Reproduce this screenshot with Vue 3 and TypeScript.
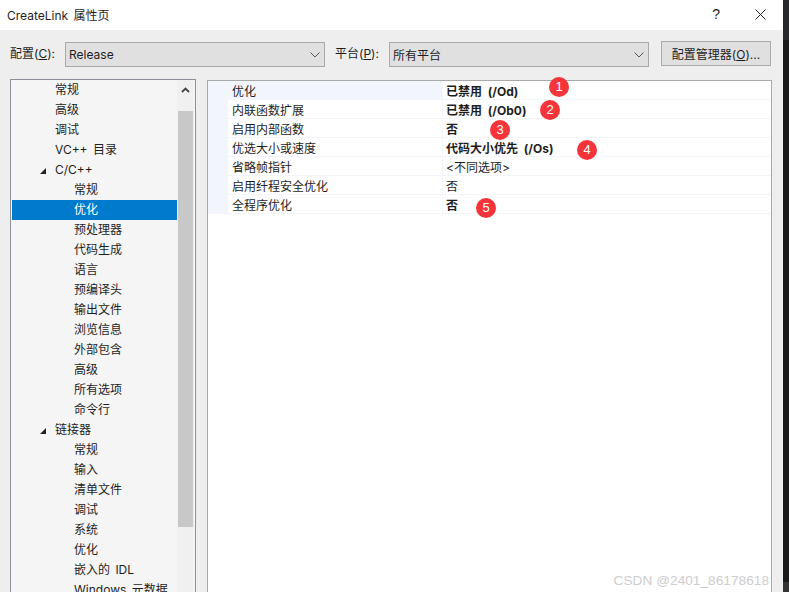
<script setup lang="ts">
interface TreeItem { label: string; level: number; open?: boolean; selected?: boolean }
const tree: TreeItem[] = [
  { label: '常规', level: 1 }, { label: '高级', level: 1 }, { label: '调试', level: 1 },
  { label: 'VC++ 目录', level: 1 }, { label: 'C/C++', level: 1, open: true },
  { label: '常规', level: 2 }, { label: '优化', level: 2, selected: true },
  { label: '预处理器', level: 2 }, { label: '代码生成', level: 2 }, { label: '语言', level: 2 },
  { label: '预编译头', level: 2 }, { label: '输出文件', level: 2 }, { label: '浏览信息', level: 2 },
  { label: '外部包含', level: 2 }, { label: '高级', level: 2 }, { label: '所有选项', level: 2 },
  { label: '命令行', level: 2 }, { label: '链接器', level: 1, open: true },
  { label: '常规', level: 2 }, { label: '输入', level: 2 }, { label: '清单文件', level: 2 },
  { label: '调试', level: 2 }, { label: '系统', level: 2 }, { label: '优化', level: 2 },
  { label: '嵌入的 IDL', level: 2 }, { label: 'Windows 元数据', level: 2 }
]
interface Row { name: string; value: string; bold: boolean; first?: boolean }
const rows: Row[] = [
  { name: '优化', value: '已禁用 (/Od)', bold: true, first: true },
  { name: '内联函数扩展', value: '已禁用 (/Ob0)', bold: true },
  { name: '启用内部函数', value: '否', bold: true },
  { name: '优选大小或速度', value: '代码大小优先 (/Os)', bold: true },
  { name: '省略帧指针', value: '<不同选项>', bold: false },
  { name: '启用纤程安全优化', value: '否', bold: false },
  { name: '全程序优化', value: '否', bold: true }
]
/* Red numbered annotations pasted over the grid: centre points in grid coordinates */
const marks = [
  { n: 1, x: 351, y: 6 },
  { n: 2, x: 342, y: 29 },
  { n: 3, x: 292, y: 49 },
  { n: 4, x: 379, y: 69 },
  { n: 5, x: 278, y: 127 }
]
</script>

<template>
  <div class="dialog">
    <header class="titlebar">
      <span class="title">CreateLink 属性页</span>
      <span class="help">?</span>
      <svg class="close" width="11" height="11" viewBox="0 0 11 11"><path d="M.5.5l10 10M10.500.5l-10 10" stroke="#222" stroke-width="1" fill="none" /></svg>
    </header>
    <main class="body">
      <div class="toolbar">
        <label class="lab lab-config">配置(<u>C</u>):</label>
        <div class="select">
          <span>Release</span>
          <svg width="10" height="6" viewBox="0 0 10 6"><path d="M.5.5L5 5 9.500.5" stroke="#555" fill="none" /></svg>
        </div>
        <label class="lab lab-platform">平台(<u>P</u>):</label>
        <div class="select">
          <span>所有平台</span>
          <svg width="10" height="6" viewBox="0 0 10 6"><path d="M.5.5L5 5 9.500.5" stroke="#555" fill="none" /></svg>
        </div>
        <button class="manager">配置管理器(<u>O</u>)...</button>
      </div>
      <div class="panes">
        <nav class="treebox">
          <ul class="tree">
            <li v-for="(it, i) in tree" :key="i" class="node" :class="[`lv${it.level}`, { sel: it.selected }]">
              <i v-if="it.open" class="arrow"></i>{{ it.label }}
            </li>
          </ul>
          <div class="scroll">
            <div class="scroll-up">
              <svg width="9" height="6" viewBox="0 0 9 6"><path d="M1 5l3.500-3.500L8 5" stroke="#444" stroke-width="1.800" fill="none" /></svg>
            </div>
            <div class="thumb"></div>
          </div>
        </nav>
        <section class="grid">
          <div v-for="(r, i) in rows" :key="i" class="row" :class="{ first: r.first }">
            <div class="gutter"></div>
            <div class="name">{{ r.name }}</div>
            <div class="value" :class="{ bold: r.bold }">{{ r.value }}</div>
          </div>
          <b v-for="m in marks" :key="m.n" class="mark" :style="{ left: m.x - 10 + 'px', top: m.y - 10 + 'px' }">{{ m.n }}</b>
        </section>
      </div>
    </main>
    <span class="wm">CSDN @2401_86178618</span>
  </div>
  <div class="edge"></div>
</template>

<style>
html, body { margin: 0; background: #1c1c1c; overflow: hidden; }
</style>

<style scoped>
.dialog {
  position: relative;
  width: 783px;
  height: 592px;
  background: #fff;
  font-family: Inter, "Noto Sans CJK SC", sans-serif;
  font-size: 12px;
  word-spacing: 2px;
  color: #1e1e1e;
  display: flex;
  flex-direction: column;
  overflow: hidden;
}
.edge {
  position: absolute;
  top: 0;
  right: 0;
  width: 6px;
  height: 592px;
  background: linear-gradient(#26282b 40px, #1a1a1a 40px, #1a1a1a 582px, #333 582px);
}
.titlebar { height: 30px; display: flex; align-items: center; padding: 0 17px 2px 7px; box-sizing: border-box; flex: none; }
.title { flex: 1; font-size: 12px; }
.help { font-size: 14px; margin-right: 35px; font-family: "Liberation Sans", sans-serif; }
.body { flex: 1; background: #eeeeee; display: flex; flex-direction: column; min-height: 0; }
.toolbar { height: 49px; display: flex; align-items: flex-start; padding-top: 12px; box-sizing: border-box; flex: none; }
.lab { line-height: 23px; white-space: nowrap; font-size: 12px; box-sizing: border-box; }
.lab-config { width: 65px; padding-left: 10px; }
.lab-platform { width: 54px; margin-left: 10px; }
.select {
  width: 260px;
  height: 25px;
  box-sizing: border-box;
  border: 1px solid #a9a9a9;
  background: #e0e0e0;
  display: flex;
  align-items: center;
  justify-content: space-between;
  padding: 0 4px 0 3px;
}
.manager {
  width: 110px;
  height: 25px;
  margin: -1px 0 0 12px;
  border: 1px solid #a9a9a9;
  background: #e0e0e0;
  font: inherit;
  color: inherit;
  padding: 0;
}
.panes { flex: 1; display: flex; padding-left: 10px; min-height: 0; }
.treebox {
  width: 186px;
  height: 600px;
  box-sizing: border-box;
  border: 1px solid #8f8f9c;
  background: #f5f5f5;
  display: flex;
  flex: none;
}
.tree { list-style: none; margin: 0; padding: 0 0 0 1px; width: 166px; box-sizing: border-box; flex: none; }
.node { height: 20px; line-height: 20px; position: relative; white-space: nowrap; }
.lv1 { padding-left: 43px; }
.lv2 { padding-left: 62px; }
.sel { background: #007acc; color: #fff; }
.arrow {
  position: absolute;
  left: 28px;
  top: 8px;
  width: 0;
  height: 0;
  border-style: solid;
  border-width: 0 0 6px 6px;
  border-color: transparent transparent #222 transparent;
}
.scroll { width: 17px; background: #f0f0f0; flex: none; padding-left: 1px; box-sizing: border-box; }
.scroll-up { width: 15px; height: 31px; display: flex; justify-content: center; padding-top: 7px; box-sizing: border-box; }
.thumb { width: 15px; height: 416px; background: #c8c8c8; }
.grid {
  position: relative;
  width: 565px;
  margin: 1px 0 0 11px;
  box-sizing: border-box;
  height: 600px;
  border: 1px solid #a9a9a9;
  background: #fff;
  flex: none;
}
.row { height: 19px; display: flex; border-bottom: 1px solid #f2f5fa; box-sizing: border-box; line-height: 22px; }
.gutter { width: 20px; background: #f2f6fc; flex: none; }
.name { width: 215px; padding-left: 4px; box-sizing: border-box; flex: none; border-right: 1px solid #f2f5fa; }
.first .name { background: #f2f6fc; }
.value { flex: 1; padding-left: 3px; }
.bold { font-weight: 700; word-spacing: 3px; }
.mark {
  position: absolute;
  width: 20px;
  height: 20px;
  line-height: 20px;
  border-radius: 50%;
  background: #f5353a;
  color: #fff;
  font-weight: 400;
  font-size: 13px;
  text-align: center;
  font-family: "Liberation Sans", sans-serif;
}
.wm {
  position: absolute;
  right: 14px;
  bottom: 4px;
  font-family: "Liberation Sans", sans-serif;
  font-size: 13.700px;
  word-spacing: 0;
  color: #cdcdcd;
}
</style>
